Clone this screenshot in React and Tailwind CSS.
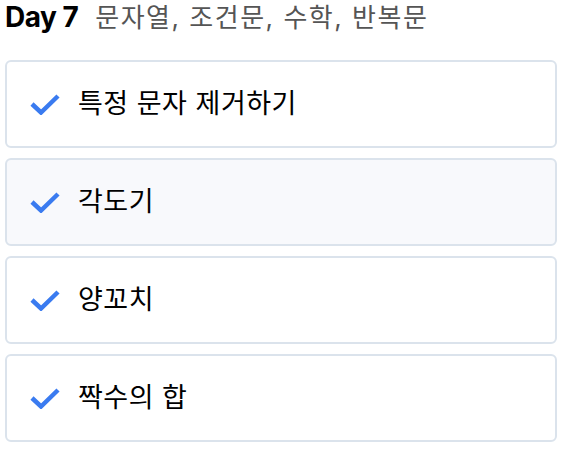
const items = [
  { id: 1, title: "특정 문자 제거하기", active: false },
  { id: 2, title: "각도기", active: true },
  { id: 3, title: "양꼬치", active: false },
  { id: 4, title: "짝수의 합", active: false },
];

const Check = () => (
  <svg width="30" height="22" viewBox="0 0 30 22" className="shrink-0">
    <polyline
      points="2,11 11,19.5 28,3"
      fill="none"
      stroke="#3a7bf0"
      strokeWidth="4.5"
    />
  </svg>
);

export default function App() {
  return (
    <div
      className="w-[566px] h-[452px] bg-white pl-[5px] pr-[9px]"
      style={{ fontFamily: '"Inter", "Noto Sans CJK KR", sans-serif' }}
    >
      <div className="flex items-baseline gap-[17px] leading-[34px]">
        <span className="text-[28px] font-bold text-black tracking-[-0.5px]">Day 7</span>
        <span className="text-[26px] text-[#555] tracking-[1.5px]">문자열, 조건문, 수학, 반복문</span>
      </div>
      <ul className="mt-[25px] flex flex-col gap-[10px]">
        {items.map((item) => (
          <li
            key={item.id}
            className={`h-[88px] flex items-center gap-[18px] pl-[23px] rounded-[6px] border-2 border-[#dbe3ec] ${
              item.active ? "bg-[#f8f9fc]" : "bg-white"
            }`}
          >
            <Check />
            <span className="text-[27px] text-black tracking-[0.5px]">{item.title}</span>
          </li>
        ))}
      </ul>
    </div>
  );
}
